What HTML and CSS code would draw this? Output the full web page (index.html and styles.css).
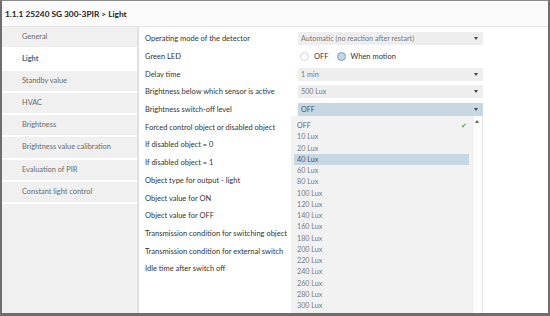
FILE: index.html
```html
<!DOCTYPE html>
<html lang="en">
<head>
  <meta charset="UTF-8">
  <title>1.1.1 25240 SG 300-3PIR &gt; Light</title>
  <link rel="stylesheet" href="styles.css">
</head>
<body>
  <div class="window">
    <div class="title">1.1.1 25240 SG 300-3PIR &gt; Light</div>

    <div class="main">
      <ul class="menu">
        <li>General</li>
        <li class="active">Light</li>
        <li>Standby value</li>
        <li>HVAC</li>
        <li>Brightness</li>
        <li>Brightness value calibration</li>
        <li>Evaluation of PIR</li>
        <li>Constant light control</li>
      </ul>

      <div class="params">
        <div class="row">
          <span class="label">Operating mode of the detector</span>
          <div class="select">Automatic (no reaction after restart)<span class="arrow"></span></div>
        </div>
        <div class="row">
          <span class="label">Green LED</span>
          <div class="radios">
            <span class="radio"></span>OFF
            <span class="radio on"></span>When motion
          </div>
        </div>
        <div class="row">
          <span class="label">Delay time</span>
          <div class="select">1 min<span class="arrow"></span></div>
        </div>
        <div class="row">
          <span class="label">Brightness below which sensor is active</span>
          <div class="select">500 Lux<span class="arrow"></span></div>
        </div>
        <div class="row">
          <span class="label">Brightness switch-off level</span>
          <div class="select open">OFF<span class="arrow"></span>
            <div class="list">
              <ul class="options">
                <li class="checked">OFF<span class="check">&#10004;</span></li>
                <li>10 Lux</li>
                <li>20 Lux</li>
                <li class="hover">40 Lux</li>
                <li>60 Lux</li>
                <li>80 Lux</li>
                <li>100 Lux</li>
                <li>120 Lux</li>
                <li>140 Lux</li>
                <li>160 Lux</li>
                <li>180 Lux</li>
                <li>200 Lux</li>
                <li>220 Lux</li>
                <li>240 Lux</li>
                <li>260 Lux</li>
                <li>280 Lux</li>
                <li>300 Lux</li>
              </ul>
              <div class="scroll"><span class="up"></span></div>
            </div>
          </div>
        </div>
        <div class="row"><span class="label">Forced control object or disabled object</span></div>
        <div class="row"><span class="label">If disabled object = 0</span></div>
        <div class="row"><span class="label">If disabled object = 1</span></div>
        <div class="row"><span class="label">Object type for output - light</span></div>
        <div class="row"><span class="label">Object value for ON</span></div>
        <div class="row"><span class="label">Object value for OFF</span></div>
        <div class="row"><span class="label">Transmission condition for switching object</span></div>
        <div class="row"><span class="label">Transmission condition for external switch</span></div>
        <div class="row"><span class="label">Idle time after switch off</span></div>
      </div>
    </div>
  </div>
</body>
</html>
```

FILE: styles.css
```css
body {
  margin: 0;
  font-family: Lato, "Open Sans", sans-serif;
  background-color: #ffffff;
}

.window {
  width: 550px;
  height: 316px;
  box-sizing: border-box;
  border: 2px solid #6e6e6e;
  border-top: 1px solid #8a8a8a;
  border-bottom: 3px solid #6e6e6e;
  overflow: hidden;
  display: flex;
  flex-direction: column;
}

.title {
  height: 25px;
  line-height: 26px;
  padding-left: 3px;
  font-size: 8.3px;
  font-weight: bold;
  color: #222;
  background-color: #fbfbfb;
  border-bottom: 1px solid #e4e4e4;
}

.main {
  flex: 1;
  display: flex;
}

.menu {
  list-style: none;
  margin: 0;
  padding: 0;
  width: 135px;
  background-color: #f0f0f0;
  border-right: 2px solid #e0e0e0;
}

.menu li {
  height: 20.1px;
  line-height: 20.1px;
  padding-left: 20px;
  font-size: 7.4px;
  color: #6a6a6a;
  border-bottom: 2px solid #ffffff;
}

.menu li.active {
  background-color: #ffffff;
  color: #1d6d8c;
  font-weight: bold;
}

.params {
  flex: 1;
  padding-top: 3px;
  padding-left: 6px;
}

.row {
  height: 17.7px;
  display: flex;
  align-items: center;
}

.label {
  width: 153px;
  font-size: 7.5px;
  color: #333;
  white-space: nowrap;
}

.select {
  position: relative;
  width: 185px;
  height: 13px;
  line-height: 13px;
  box-sizing: border-box;
  padding-left: 3px;
  font-size: 7.2px;
  color: #7a7a7a;
  background-color: #eeeeee;
}

.select.open {
  background-color: #c7d7e3;
  color: #555;
}

.arrow {
  position: absolute;
  right: 5px;
  top: 5px;
  border-left: 2.5px solid transparent;
  border-right: 2.5px solid transparent;
  border-top: 3px solid #444;
}

.radios {
  display: flex;
  align-items: center;
  font-size: 7.5px;
  color: #333;
}

.radio {
  width: 9px;
  height: 9px;
  box-sizing: border-box;
  border-radius: 50%;
  border: 1px solid #d4d4d4;
  background-color: #fff;
  margin: 0 5px 0 2px;
}

.radio.on {
  border: 1.5px solid #7c9db3;
  background-color: #c3d6e4;
  margin-left: 8px;
}

.list {
  position: absolute;
  left: -7px;
  top: 13px;
  width: 192px;
  height: 200px;
  display: flex;
  background-color: #f2f2f2;
}

.options {
  list-style: none;
  margin: 0;
  padding: 4px 0 0 0;
  width: 182px;
}

.options li {
  position: relative;
  height: 11.25px;
  line-height: 11.25px;
  margin: 0 3px;
  padding-left: 3px;
  font-size: 7.2px;
  color: #7a7a7a;
}

.options li.checked {
  color: #666;
}

.options li.hover {
  background-color: #c7d7e3;
  color: #555;
}

.check {
  position: absolute;
  right: 2px;
  top: 0;
  font-size: 7px;
  color: #4caf50;
}

.scroll {
  position: relative;
  width: 9px;
  background-color: #fcfcfc;
  border-left: 1px solid #ececec;
  border-right: 1px solid #e6e6e6;
}

.up {
  position: absolute;
  left: 2px;
  top: 4px;
  border-left: 2.5px solid transparent;
  border-right: 2.5px solid transparent;
  border-bottom: 3px solid #666;
}
```
